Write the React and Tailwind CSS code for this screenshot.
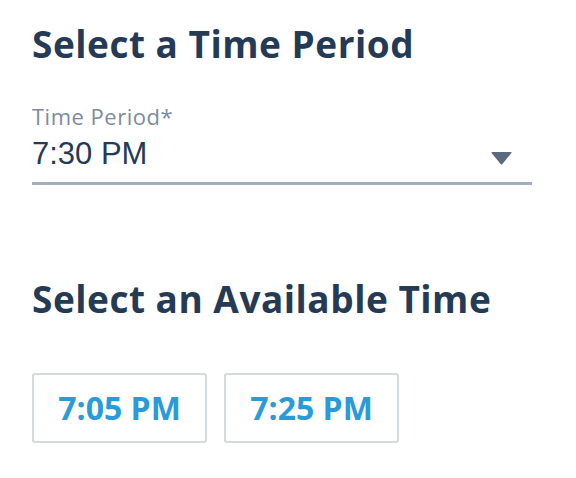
export default function App() {
  const times = ["7:05 PM", "7:25 PM"];
  return (
    <div className="w-[576px] h-[478px] bg-white px-8 pt-[24px] font-['Open_Sans',sans-serif]">
      <h1 className="text-[37px] leading-[40px] tracking-[0.5px] font-bold text-[#253a54]">
        Select a Time Period
      </h1>
      <div className="mt-[40px] w-[500px]">
        <div className="text-[22px] leading-[24px] tracking-[0.5px] text-[#7d8b9e]">
          Time Period*
        </div>
        <div className="mt-2 flex items-start justify-between border-b-[3px] border-[#a1afbe] pb-[10px]">
          <span className="text-[31px] leading-[36px] text-[#253a54] font-['Liberation_Sans',sans-serif]">
            7:30 PM
          </span>
          <svg width="21" height="13" viewBox="0 0 21 13" className="mt-4 mr-5">
            <path d="M1 0 H20 Q21 0 20.4 1 L11.2 12.2 Q10.5 13 9.8 12.2 L0.6 1 Q0 0 1 0 Z" fill="#5b6b7f" />
          </svg>
        </div>
      </div>
      <h2 className="mt-[94px] text-[37px] leading-[40px] tracking-[0.5px] font-bold text-[#253a54]">
        Select an Available Time
      </h2>
      <div className="mt-[54px] flex gap-[17px]">
        {times.map((t, i) => (
          <button
            key={i}
            className="w-[175px] h-[70px] border-2 border-[#d3dae1] rounded-[3px] text-[32px] leading-[40px] font-bold text-[#2b9ad9]"
          >
            {t}
          </button>
        ))}
      </div>
    </div>
  );
}
